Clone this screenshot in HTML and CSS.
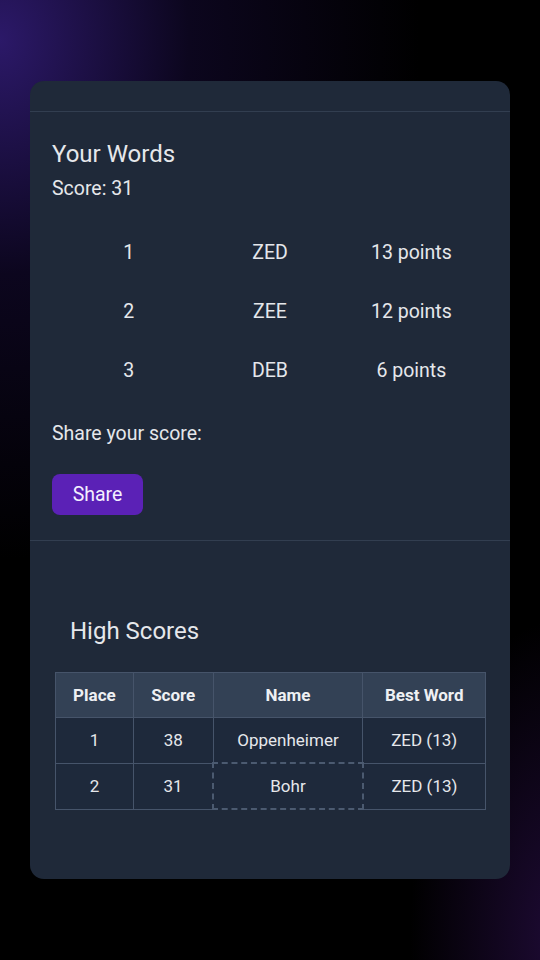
FILE: index.html
```html
<!DOCTYPE html>
<html>
<head>
<meta charset="utf-8">
<link rel="stylesheet" href="styles.css">
</head>
<body>
<div class="card">
  <div class="card-top"></div>
  <section class="words">
    <h2 class="title">Your Words</h2>
    <p class="score">Score: 31</p>
    <div class="word-list">
      <div class="word-row"><span>1</span><span>ZED</span><span>13 points</span></div>
      <div class="word-row"><span>2</span><span>ZEE</span><span>12 points</span></div>
      <div class="word-row"><span>3</span><span>DEB</span><span>6 points</span></div>
    </div>
    <p class="share-label">Share your score:</p>
    <button class="share-btn">Share</button>
  </section>
  <section class="highscores">
    <h2 class="title hs-title">High Scores</h2>
    <table class="hs-table">
      <colgroup>
        <col class="c-place"><col class="c-score"><col class="c-name"><col class="c-word">
      </colgroup>
      <thead>
        <tr><th>Place</th><th>Score</th><th>Name</th><th>Best Word</th></tr>
      </thead>
      <tbody>
        <tr><td>1</td><td>38</td><td>Oppenheimer</td><td>ZED (13)</td></tr>
        <tr><td>2</td><td>31</td><td class="current">Bohr</td><td>ZED (13)</td></tr>
      </tbody>
    </table>
  </section>
</div>
</body>
</html>
```
FILE: styles.css
```css
html, body {
  margin: 0;
  height: 100%;
}
body {
  width: 540px;
  height: 960px;
  box-sizing: border-box;
  padding: 81px 30px 0 30px;
  font-family: Roboto, "Noto Sans", sans-serif;
  color: #e5e7eb;
  background:
    radial-gradient(ellipse 420px 520px at 0px 40px, rgba(46, 26, 110, 0.95), rgba(20, 10, 50, 0.6) 45%, rgba(0,0,0,0) 100%),
    radial-gradient(ellipse 150px 320px at 560px 940px, rgba(40, 14, 70, 0.75), rgba(0,0,0,0) 100%),
    #000;
  overflow: hidden;
}
.card {
  width: 480px;
  height: 798px;
  background: #1f2939;
  border-radius: 14px;
  overflow: hidden;
  display: flex;
  flex-direction: column;
}
.card-top {
  height: 30px;
  border-bottom: 1px solid #323e50;
}
.words {
  padding: 28px 22px 25px 22px;
  border-bottom: 1px solid #323e50;
  display: flex;
  flex-direction: column;
  align-items: flex-start;
}
.title {
  margin: 0;
  font-size: 24px;
  font-weight: 400;
  line-height: 29px;
}
.score {
  margin: 9px 0 0 0;
  font-size: 19.5px;
  line-height: 22px;
}
.word-list {
  align-self: stretch;
  margin-top: 23px;
  padding: 0 6px;
}
.word-row {
  display: grid;
  grid-template-columns: 1fr 1fr 1fr;
  height: 59px;
  align-items: center;
  text-align: center;
  font-size: 19.5px;
}
.share-label {
  margin: 23px 0 0 0;
  font-size: 19.5px;
  line-height: 22px;
}
.share-btn {
  margin-top: 29px;
  width: 91px;
  height: 41px;
  border: none;
  border-radius: 8px;
  background: #5b21b6;
  color: #f3f0ff;
  font-family: Roboto, "Noto Sans", sans-serif;
  font-size: 19.5px;
  padding: 0;
}
.highscores {
  flex: 1;
  padding: 76px 0 0 25px;
}
.hs-title {
  padding-left: 15px;
}
.hs-table {
  margin-top: 26px;
  border-collapse: collapse;
  width: 431px;
  font-size: 17px;
  text-align: center;
}
.c-place { width: 78px; }
.c-score { width: 80px; }
.c-name { width: 150px; }
.c-word { width: 123px; }
.hs-table th, .hs-table td {
  border: 1px solid #46546a;
  padding: 0;
}
.hs-table th {
  height: 44px;
  background: #334155;
  font-weight: 700;
  color: #eef0f3;
}
.hs-table td {
  height: 44px;
  background: #1e293b;
}
.hs-table td.current {
  border: 2px dashed #4b5a70;
}
```
